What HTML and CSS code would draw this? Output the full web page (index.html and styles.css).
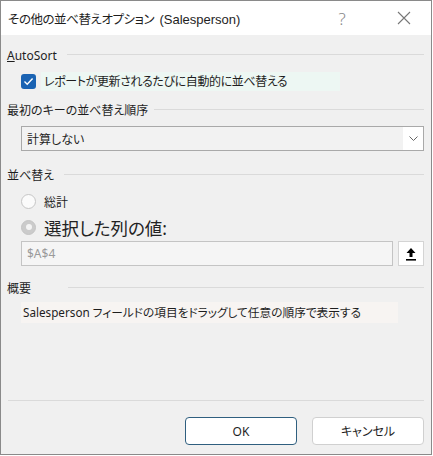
FILE: index.html
```html
<!DOCTYPE html>
<html lang="ja">
<head>
<meta charset="utf-8">
<link rel="stylesheet" href="styles.css">
</head>
<body>
<div class="window">
  <div class="titlebar">
    <span class="title">その他の並べ替えオプション <span class="latin">(Salesperson)</span></span>
    <span class="help">?</span>
    <span class="close">
      <svg width="14" height="14" viewBox="0 0 14 14"><path d="M1 1L13 13M13 1L1 13" stroke="#777" stroke-width="1.1" fill="none"/></svg>
    </span>
  </div>
  <div class="content">
    <div class="heading h1"><span><u>A</u>utoSort</span></div>
    <div class="check-row">
      <span class="checkbox">
        <svg width="11" height="9" viewBox="0 0 11 9"><path d="M1.5 4.6L4.2 7.2L9.6 1.6" stroke="#fff" stroke-width="1.4" fill="none"/></svg>
      </span>
      <span class="check-label">レポートが更新されるたびに自動的に並べ替える</span>
    </div>
    <div class="heading h2"><span>最初のキーの並べ替え順序</span></div>
    <div class="select">
      <span class="select-text">計算しない</span>
      <span class="select-btn">
        <svg width="9" height="5" viewBox="0 0 9 5"><path d="M0.5 0.5L4.5 4.5L8.5 0.5" stroke="#666" stroke-width="1" fill="none"/></svg>
      </span>
    </div>
    <div class="heading h3"><span>並べ替え</span></div>
    <div class="radio-row r1">
      <span class="radio"></span>
      <span class="radio-label">総計</span>
    </div>
    <div class="radio-row r2">
      <span class="radio selected"></span>
      <span class="radio-label big">選択した列の値:</span>
    </div>
    <div class="ref-row">
      <div class="ref-input">$A$4</div>
      <div class="ref-btn">
        <svg width="12" height="14" viewBox="0 0 12 14"><path d="M6 1L1.5 6H4.5V10H7.5V6H10.5Z" fill="#000"/><rect x="1" y="12" width="10" height="1.6" fill="#000"/></svg>
      </div>
    </div>
    <div class="heading h4"><span>概要</span></div>
    <div class="summary">Salesperson フィールドの項目をドラッグして任意の順序で表示する</div>
    <div class="sep"></div>
    <div class="buttons">
      <button class="btn default">OK</button>
      <button class="btn">キャンセル</button>
    </div>
  </div>
</div>
</body>
</html>
```

FILE: styles.css
```css
html, body {
  margin: 0;
  padding: 0;
  background: #ffffff;
}
body {
  font-family: "Noto Sans", "Noto Sans CJK JP", sans-serif;
  font-feature-settings: "palt";
  color: #1e1e1e;
}
.window {
  box-sizing: border-box;
  width: 432px;
  height: 455px;
  border: 1px solid #8a8a8a;
  display: flex;
  flex-direction: column;
  background: #f0f0f0;
}
.titlebar {
  height: 34px;
  background: #ffffff;
  display: flex;
  align-items: center;
  padding-left: 7px;
  flex-shrink: 0;
}
.title {
  font-family: "Noto Sans CJK JP", sans-serif;
  font-size: 12.5px;
  letter-spacing: -0.45px;
  color: #1e1e1e;
  flex: 1;
  white-space: nowrap;
}
.title .latin {
  font-family: "Liberation Sans", Arial, sans-serif;
  font-size: 13px;
  letter-spacing: 0;
  margin-left: 3px;
}
.help {
  width: 70px;
  text-align: center;
  font-size: 17px;
  color: #888;
  font-family: "Noto Sans", sans-serif;
  font-weight: 300;
}
.close {
  width: 54px;
  display: flex;
  justify-content: center;
  align-items: center;
}
.content {
  flex: 1;
  display: flex;
  flex-direction: column;
  padding: 0 7px 9px 6px;
}
.heading {
  height: 18px;
  display: flex;
  align-items: center;
  font-size: 12px;
  white-space: nowrap;
}
.heading::after {
  content: "";
  flex: 1;
  height: 1px;
  background: #dadada;
  margin-left: 6px;
  margin-top: -2px;
}
.h1 { margin-top: 11px; }
.h1::after { margin-left: 10px; }
.h2 { margin-top: 10px; }
.h3 { margin-top: 15px; }
.h3::after { margin-left: 10px; }
.h4 { margin-top: 13px; }
.h4::after { margin-left: 37px; }
.check-row {
  margin-top: 8px;
  height: 19px;
  display: flex;
  align-items: center;
  padding-left: 14px;
}
.checkbox {
  width: 15px;
  height: 15px;
  border-radius: 3px;
  background: #1b63b3;
  display: flex;
  align-items: center;
  justify-content: center;
  flex-shrink: 0;
}
.check-label {
  margin-left: 5px;
  padding: 0 53px 0 3px;
  height: 19px;
  line-height: 19px;
  font-size: 12px;
  letter-spacing: -0.4px;
  background: #edf7f3;
  white-space: nowrap;
}
.select {
  margin: 7px 0 0 14px;
  height: 25px;
  box-sizing: border-box;
  border: 1px solid #a9a9a9;
  background: #f2f2f2;
  display: flex;
  align-items: center;
}
.select-text {
  flex: 1;
  padding-left: 5px;
  font-size: 12px;
}
.select-btn {
  width: 20px;
  height: 23px;
  background: #ffffff;
  display: flex;
  align-items: center;
  justify-content: center;
}
.radio-row {
  display: flex;
  align-items: center;
  padding-left: 14px;
}
.r1 { margin-top: 8px; height: 19px; }
.r2 { margin-top: 6px; height: 20px; }
.radio {
  box-sizing: border-box;
  width: 15px;
  height: 15px;
  border-radius: 50%;
  border: 1px solid #c6c6c6;
  background: #fbfbfb;
  flex-shrink: 0;
  display: flex;
  align-items: center;
  justify-content: center;
}
.radio.selected {
  background: #cbcbcb;
  border-color: #c4c4c4;
}
.radio.selected::after {
  content: "";
  width: 6px;
  height: 6px;
  border-radius: 50%;
  background: #f4f4f4;
}
.radio-label {
  margin-left: 8px;
  font-size: 12px;
}
.radio-label.big {
  font-size: 17.5px;
  color: #222;
}
.ref-row {
  margin: 4px 0 0 14px;
  height: 25px;
  display: flex;
  gap: 5px;
}
.ref-input {
  flex: 1;
  box-sizing: border-box;
  border: 1px solid #c4c4c4;
  background: #f5f5f5;
  color: #9a9a9a;
  font-size: 12px;
  padding-left: 5px;
  display: flex;
  align-items: center;
}
.ref-btn {
  width: 26px;
  box-sizing: border-box;
  border: 1px solid #d4d4d4;
  background: #ffffff;
  display: flex;
  align-items: center;
  justify-content: center;
}
.summary {
  margin: 5px 0 0 14px;
  width: 375px;
  height: 21px;
  line-height: 21px;
  padding-left: 2px;
  font-size: 11.7px;
  background: #f7f4f2;
  white-space: nowrap;
}
.sep {
  margin-top: auto;
  height: 1px;
  background: #dadada;
  margin-left: 1px;
}
.buttons {
  margin-top: 16px;
  display: flex;
  justify-content: flex-end;
  gap: 15px;
}
.btn {
  width: 112px;
  height: 28px;
  box-sizing: border-box;
  border: 1px solid #d0d0d0;
  border-radius: 4px;
  background: #ffffff;
  font-family: "Noto Sans", "Noto Sans CJK JP", sans-serif;
  font-feature-settings: "palt";
  font-size: 12px;
  color: #1e1e1e;
  padding: 0;
}
.btn.default {
  border-color: #2f5f7f;
}
```
